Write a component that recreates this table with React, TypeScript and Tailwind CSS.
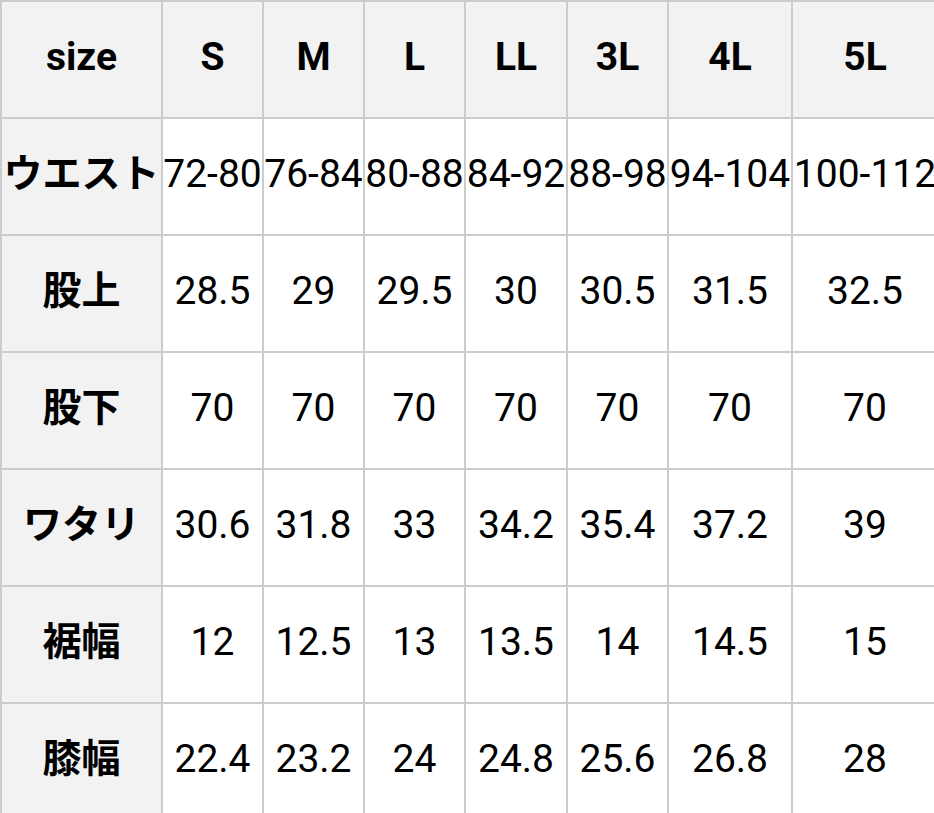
import React from "react";

const headers = ["size", "S", "M", "L", "LL", "3L", "4L", "5L"];
const rows: [string, string[]][] = [
  ["ウエスト", ["72-80", "76-84", "80-88", "84-92", "88-98", "94-104", "100-112"]],
  ["股上", ["28.5", "29", "29.5", "30", "30.5", "31.5", "32.5"]],
  ["股下", ["70", "70", "70", "70", "70", "70", "70"]],
  ["ワタリ", ["30.6", "31.8", "33", "34.2", "35.4", "37.2", "39"]],
  ["裾幅", ["12", "12.5", "13", "13.5", "14", "14.5", "15"]],
  ["膝幅", ["22.4", "23.2", "24", "24.8", "25.6", "26.8", "28"]],
];

export default function App() {
  return (
    <div className="w-[934px] h-[813px] overflow-hidden bg-white">
      <div
        className="grid w-max gap-[2px] p-[2px] pr-0 bg-[#cccccc] grid-cols-[159px_99px_99px_99px_100px_99px_122px_144px] auto-rows-[115px] text-black text-[39px] leading-none"
        style={{ fontFamily: 'Roboto, "Noto Sans CJK JP", sans-serif' }}
      >
        {headers.map((h) => (
          <div key={h} className="flex items-center justify-center pb-[4px] bg-[#f2f2f2] font-bold whitespace-nowrap">
            {h}
          </div>
        ))}
        {rows.map(([label, vals]) => (
          <React.Fragment key={label}>
            <div className="flex items-center justify-center pb-[4px] bg-[#f2f2f2] font-bold whitespace-nowrap">
              {label}
            </div>
            {vals.map((v, i) => (
              <div key={i} className="flex items-center justify-center pb-[4px] bg-white whitespace-nowrap">
                {v}
              </div>
            ))}
          </React.Fragment>
        ))}
      </div>
    </div>
  );
}
